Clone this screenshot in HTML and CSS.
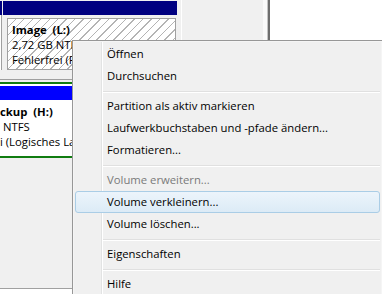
FILE: index.html
```html
<!DOCTYPE html>
<html lang="de">
<head>
<meta charset="utf-8">
<title>Datenträgerverwaltung</title>
<link rel="stylesheet" href="styles.css">
</head>
<body>
<div class="screen">
  <div class="row1">
    <div class="sliver">
      <div class="sliver-head"></div>
      <div class="sliver-body"></div>
    </div>
    <div class="cell">
      <div class="head-navy"></div>
      <div class="hatch">
        <div class="lbl-bold">Image  (L:)</div>
        <div class="lbl">2,72 GB NTFS</div>
        <div class="lbl">Fehlerfrei (Primäre Partition)</div>
      </div>
    </div>
    <div class="divider"></div>
    <div class="gray-fill"></div>
    <div class="strip-white"></div>
    <div class="strip-light"></div>
    <div class="strip-dark"></div>
    <div class="white-fill"></div>
  </div>
  <div class="row2">
    <div class="ext">
      <div class="head-blue"></div>
      <div class="ext-body">
        <div class="lbl-bold">ckup  (H:)</div>
        <div class="lbl ind3">NTFS</div>
        <div class="lbl">i (Logisches Laufwerk)</div>
      </div>
    </div>
  </div>
  <div class="row3"></div>
  <div class="row4"></div>

  <div class="menu">
    <div class="item">Öffnen</div>
    <div class="item">Durchsuchen</div>
    <div class="sep"><div class="sep-line"></div></div>
    <div class="item">Partition als aktiv markieren</div>
    <div class="item">Laufwerkbuchstaben und -pfade ändern...</div>
    <div class="item">Formatieren...</div>
    <div class="sep"><div class="sep-line"></div></div>
    <div class="item disabled">Volume erweitern...</div>
    <div class="item hot">Volume verkleinern...</div>
    <div class="item">Volume löschen...</div>
    <div class="sep"><div class="sep-line"></div></div>
    <div class="item">Eigenschaften</div>
    <div class="sep"><div class="sep-line"></div></div>
    <div class="item">Hilfe</div>
  </div>
</div>
</body>
</html>
```
FILE: styles.css
```css
html, body {
  margin: 0;
  padding: 0;
}
body {
  background: #f0f0f0;
  font-family: "Open Sans", "Noto Sans", sans-serif;
  font-size: 11.3px;
  color: #000;
}
.screen {
  position: relative;
  width: 382px;
  height: 294px;
  overflow: hidden;
  display: flex;
  flex-direction: column;
}

/* ---------- row 1 : disk with "Image (L:)" ---------- */
.row1 {
  display: flex;
  height: 79px;
  flex: none;
  background: #f0f0f0;
}
.sliver {
  width: 3px;
  display: flex;
  flex-direction: column;
}
.sliver-head {
  width: 2px;
  height: 14px;
  margin-top: 1px;
  background: #000080;
}
.sliver-body {
  width: 1px;
  height: 55px;
  background: #fff;
  border-right: 1px solid #a0a0a0;
}
.cell {
  width: 178px;
  display: flex;
  flex-direction: column;
}
.head-navy {
  width: 174px;
  height: 14px;
  margin-top: 1px;
  background: #000080;
}
.hatch {
  box-sizing: border-box;
  width: 169px;
  height: 52px;
  margin: 3px 0 0 4px;
  padding: 3px 0 0 4px;
  border: 1px solid #a0a0a0;
  background-color: #fff;
  background-image: repeating-linear-gradient(135deg, transparent 0 5px, #b4b4b4 5px 6px);
  overflow: hidden;
}
.lbl, .lbl-bold {
  line-height: 15px;
  height: 15px;
  white-space: pre;
}
.lbl-bold {
  font-weight: 700;
}
.divider {
  width: 1px;
  background: #fff;
}
.gray-fill {
  width: 81px;
  background: #f0f0f0;
}
.strip-white {
  width: 4px;
  background: #fafafa;
}
.strip-light {
  width: 1px;
  background: #c4c4c4;
}
.strip-dark {
  width: 2px;
  background: #6e6e6e;
}
.white-fill {
  flex: 1;
  background: #fff;
}

/* ---------- row 2 : extended partition "Backup (H:)" ---------- */
.row2 {
  flex: none;
  height: 79px;
  border-top: 1px solid #a0a0a0;
  box-sizing: border-box;
  padding-top: 2px;
}
.ext {
  background: #fff;
  border-top: 2px solid #107c10;
  border-bottom: 2px solid #107c10;
  padding-top: 2px;
}
.head-blue {
  height: 14px;
  background: #0000ff;
}
.ext-body {
  height: 56px;
  box-sizing: border-box;
  padding-top: 4px;
  overflow: hidden;
}
.ind3 {
  padding-left: 3px;
}

/* ---------- rows below ---------- */
.row3 {
  flex: none;
  height: 131px;
  box-sizing: border-box;
  border-bottom: 1px solid #a0a0a0;
}
.row4 {
  flex: 1;
  background: #fff;
}

/* ---------- context menu ---------- */
.menu {
  position: absolute;
  left: 72px;
  top: 40px;
  width: 311px;
  height: 262px;
  box-sizing: border-box;
  border: 1px solid #979797;
  padding: 2px;
  background: linear-gradient(to right, #f0f0f0 0 28px, #e2e3e3 28px 29px, #ffffff 29px 30px, #f0f0f0 30px);
  box-shadow: inset 0 0 0 1px #f5f5f5;
}
.item {
  box-sizing: border-box;
  height: 22px;
  line-height: 20px;
  padding-left: 31px;
  border: 1px solid transparent;
  border-radius: 3px;
  white-space: nowrap;
}
.item.disabled {
  color: #7a7a7a;
}
.item.hot {
  border-color: #aacde6;
  background: linear-gradient(#ecf4fb, #dcebf6);
}
.sep {
  height: 8px;
  box-sizing: border-box;
  padding-top: 4px;
}
.sep-line {
  margin-left: 28px;
  height: 1px;
  background: #e0e0e0;
  border-bottom: 1px solid #fff;
}
```
